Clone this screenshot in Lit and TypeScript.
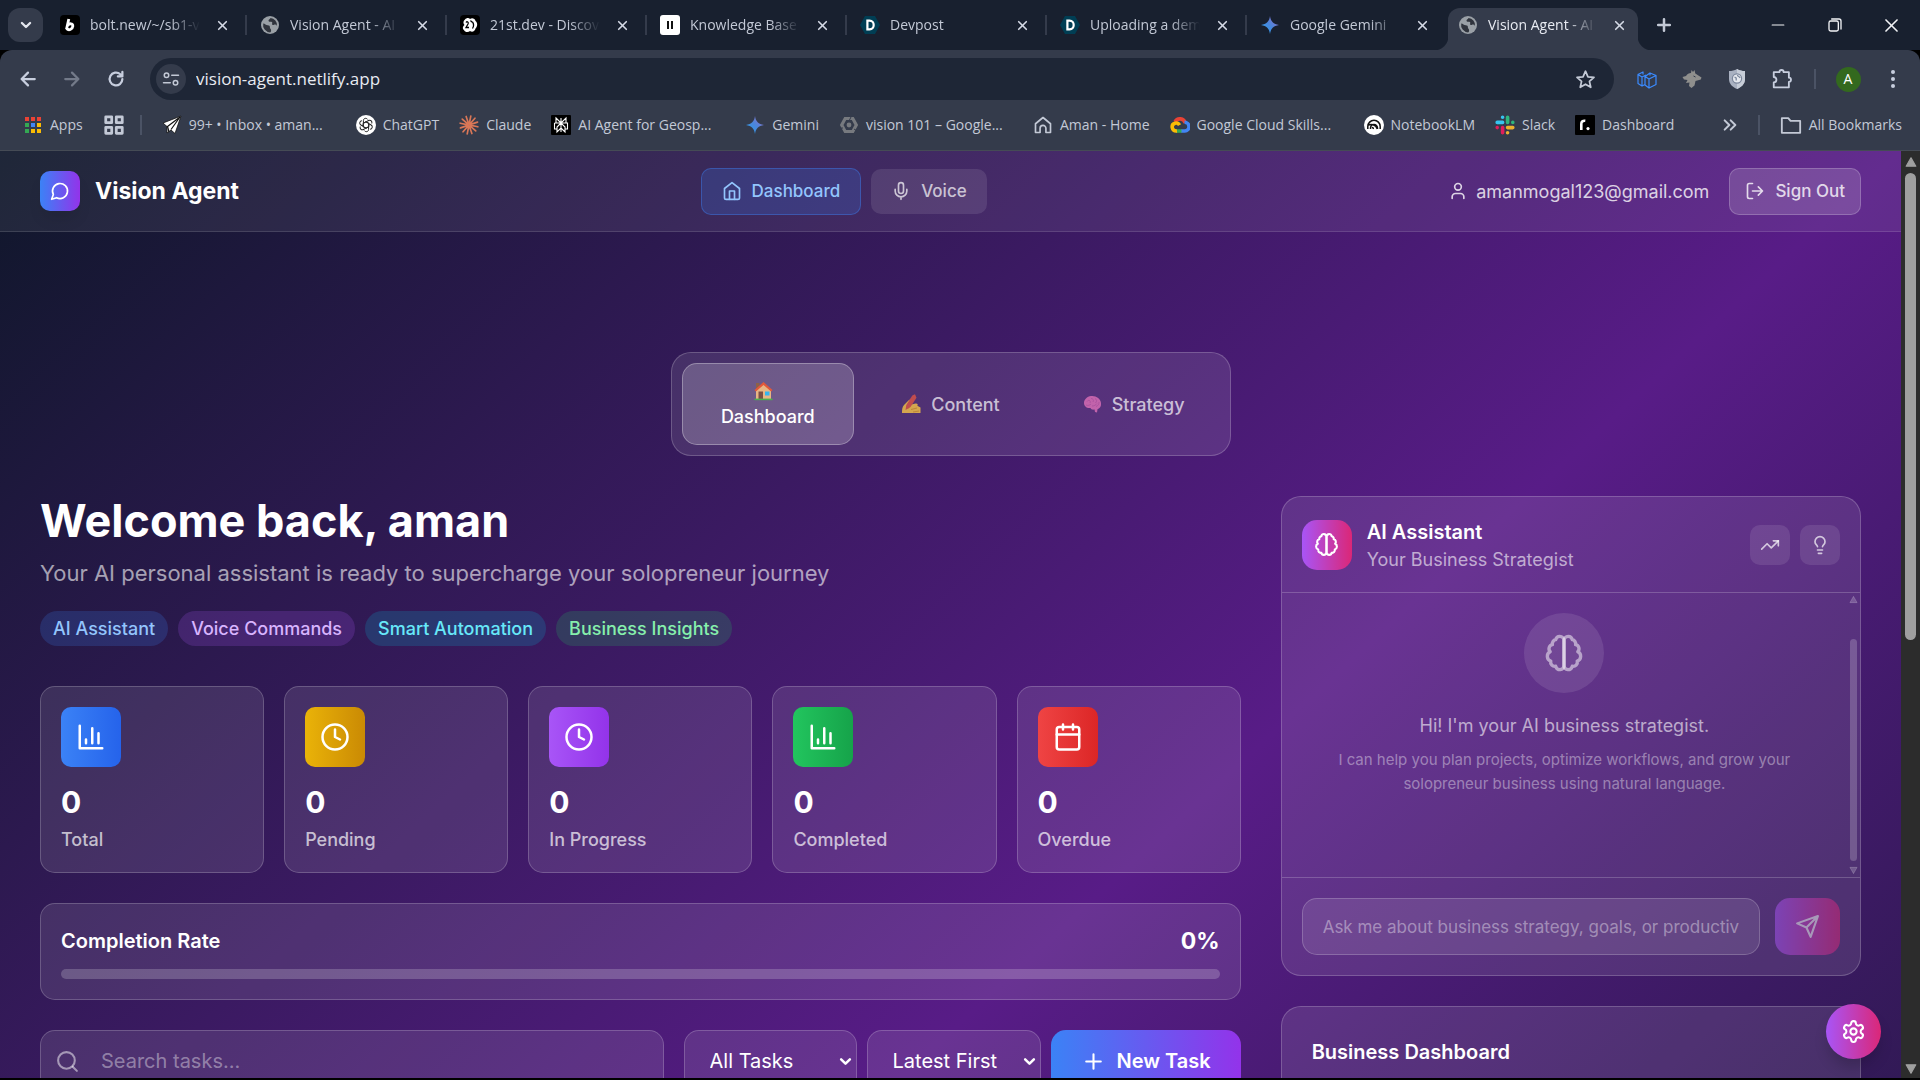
import { LitElement, html, css, svg, type TemplateResult } from "lit";
import { customElement, property } from "lit/decorators.js";
import { classMap } from "lit/directives/class-map.js";

/* ---------- Line icons (24 unit grid) ---------- */

const line: Record<string, TemplateResult> = {
  message: svg`<path d="M7.9 20A9 9 0 1 0 4 16.1L2 22Z"/>`,
  home: svg`<path d="m3 9 9-7 9 7v11a2 2 0 0 1-2 2H5a2 2 0 0 1-2-2z"/><path d="M9 22V12h6v10"/>`,
  mic: svg`<path d="M12 2a3 3 0 0 0-3 3v7a3 3 0 0 0 6 0V5a3 3 0 0 0-3-3Z"/><path d="M19 10v2a7 7 0 0 1-14 0v-2M12 19v3"/>`,
  user: svg`<path d="M19 21v-2a4 4 0 0 0-4-4H9a4 4 0 0 0-4 4v2"/><circle cx="12" cy="7" r="4"/>`,
  logout: svg`<path d="M9 21H5a2 2 0 0 1-2-2V5a2 2 0 0 1 2-2h4M16 17l5-5-5-5M21 12H9"/>`,
  chart: svg`<path d="M3 3v18h18M18 17V9M13 17V5M8 17v-3"/>`,
  clock: svg`<circle cx="12" cy="12" r="10"/><path d="M12 6v6l4 2"/>`,
  calendar: svg`<rect x="3" y="4" width="18" height="18" rx="2"/><path d="M16 2v4M8 2v4M3 10h18"/>`,
  brain: svg`<path d="M9.5 2A2.5 2.5 0 0 1 12 4.5v15a2.5 2.5 0 0 1-4.96.44 2.5 2.5 0 0 1-2.96-3.08 3 3 0 0 1-.34-5.58 2.5 2.5 0 0 1 1.32-4.24 2.5 2.5 0 0 1 1.98-3A2.5 2.5 0 0 1 9.5 2Z"/><path d="M14.5 2A2.5 2.5 0 0 0 12 4.5v15a2.5 2.5 0 0 0 4.96.44 2.5 2.5 0 0 0 2.96-3.08 3 3 0 0 0 .34-5.58 2.5 2.5 0 0 0-1.32-4.24 2.5 2.5 0 0 0-1.98-3A2.5 2.5 0 0 0 14.5 2Z"/>`,
  trend: svg`<path d="m22 7-8.5 8.5-5-5L2 17"/><path d="M16 7h6v6"/>`,
  bulb: svg`<path d="M15 14c.2-1 .7-1.7 1.5-2.5 1-.9 1.5-2.2 1.5-3.5A6 6 0 0 0 6 8c0 1 .2 2.2 1.5 3.5.7.7 1.3 1.5 1.5 2.5M9 18h6M10 22h4"/>`,
  send: svg`<path d="m22 2-7 20-4-9-9-4ZM22 2 11 13"/>`,
  gear: svg`<path d="M12.22 2h-.44a2 2 0 0 0-2 2v.18a2 2 0 0 1-1 1.73l-.43.25a2 2 0 0 1-2 0l-.15-.08a2 2 0 0 0-2.73.73l-.22.38a2 2 0 0 0 .73 2.73l.15.1a2 2 0 0 1 1 1.72v.51a2 2 0 0 1-1 1.74l-.15.09a2 2 0 0 0-.73 2.73l.22.38a2 2 0 0 0 2.73.73l.15-.08a2 2 0 0 1 2 0l.43.25a2 2 0 0 1 1 1.73V20a2 2 0 0 0 2 2h.44a2 2 0 0 0 2-2v-.18a2 2 0 0 1 1-1.73l.43-.25a2 2 0 0 1 2 0l.15.08a2 2 0 0 0 2.73-.73l.22-.39a2 2 0 0 0-.73-2.73l-.15-.08a2 2 0 0 1-1-1.74v-.5a2 2 0 0 1 1-1.74l.15-.09a2 2 0 0 0 .73-2.73l-.22-.38a2 2 0 0 0-2.73-.73l-.15.08a2 2 0 0 1-2 0l-.43-.25a2 2 0 0 1-1-1.73V4a2 2 0 0 0-2-2z"/><circle cx="12" cy="12" r="3"/>`,
  search: svg`<circle cx="11" cy="11" r="8"/><path d="m21 21-4-4"/>`,
  plus: svg`<path d="M5 12h14M12 5v14"/>`,
  chevron: svg`<path d="m5 8.500 7 7 7-7"/>`,
  close: svg`<path d="M5 5l14 14M19 5 5 19"/>`,
  back: svg`<path d="M21 12H4M12 3.500 3.500 12l8.500 8.500"/>`,
  forward: svg`<path d="M3 12h17M12 3.500 20.500 12 12 20.500"/>`,
  reload: svg`<path d="M20.500 12a8.500 8.500 0 1 1-2.800-6.300L20.500 8.500M20.500 2.500v6h-6"/>`,
  tune: svg`<circle cx="6" cy="7" r="3"/><path d="M13 7h9M2 17h9"/><circle cx="18" cy="17" r="3"/>`,
  star: svg`<path d="m12 2.500 2.800 6.400 6.900.6-5.200 4.600 1.500 6.800-6-3.600-6 3.600 1.500-6.800-5.200-4.600 6.900-.6z"/>`,
  puzzle: svg`<path d="M3 4.500h6.200a2.300 2.300 0 0 1 4.600 0H19.500v6a2.300 2.300 0 0 1 0 4.600v6H3v-5.500a2.900 2.900 0 0 0 0-5.800z"/>`,
  folder: svg`<path d="M2 4.500h7l2.500 3H22v13H2z"/>`,
  more: svg`<path d="m4 5 7 7-7 7M13 5l7 7-7 7"/>`,
  minimise: svg`<path d="M2 12h20"/>`,
  restore: svg`<rect x="3" y="6" width="14" height="15" rx="2.500"/><path d="M7 3h11a3 3 0 0 1 3 3v12"/>`,
  grid: svg`<path d="M3 3h6.500v6.500H3zM14.500 3H21v6.500h-6.500zM3 14.500h6.500V21H3zM14.500 14.500H21V21h-6.500z"/>`,
  house2: svg`<path d="M3 10.500 12 3l9 7.500V21h-5.500v-5a3.500 3.500 0 0 0-7 0v5H3z"/>`,
};

const icon = (name: string, size: number, weight = 2) => html`<svg
  width=${size} height=${size} viewBox="0 0 24 24" fill="none" stroke="currentColor"
  stroke-width=${weight} stroke-linecap="round" stroke-linejoin="round" aria-hidden="true"
>${line[name]}</svg>`;

/* ---------- Full-colour site marks (20 unit grid) ---------- */

const spark = svg`<defs><linearGradient id="sp" x1="0" y1="1" x2="1" y2="0"><stop offset="0.150" stop-color="#2f9be8"/><stop offset="0.500" stop-color="#4a86dc"/><stop offset="1" stop-color="#a06cc4"/></linearGradient></defs><path fill="url(#sp)" d="M10 1c.8 5.600 3.400 8.200 9 9-5.600.8-8.200 3.400-9 9-.8-5.600-3.400-8.200-9-9 5.600-.8 8.200-3.400 9-9z"/>`;
const rays = (n: number, r0: number, r1: number) =>
  Array.from({ length: n }, (_, i) => {
    const a = (i / n) * Math.PI * 2 + 0.2;
    const c = Math.cos(a);
    const s = Math.sin(a);
    return `M${(10 + r0 * c).toFixed(2)} ${(10 + r0 * s).toFixed(2)}L${(10 + r1 * c).toFixed(2)} ${(10 + r1 * s).toFixed(2)}`;
  }).join("");

const marks: Record<string, TemplateResult> = {
  bolt: svg`<rect width="20" height="20" rx="4"/><path fill="none" stroke="#fff" stroke-width="2.800" stroke-linejoin="round" d="M8.800 4 6.500 14.300M7.600 10.500c1.500-2.500 5.600-2.300 5.200.7-.4 3.200-4 4.800-6.200 2.300"/>`,
  globe: svg`<circle cx="10" cy="10" r="9" fill="#9aa0a6"/><path fill="#30343d" d="M3.200 8.500c2 .2 2.600 1.700 4.500 1.800 1.700.1 2.300.8 2.200 2.200-.1 1.300 1.300 1.300 1.200 3 0 .9-.4 1.600-.9 1.900A7.500 7.500 0 0 1 3.200 8.500zM10.500 3c-.3 1.300-1.800 1.300-2 2.600-.1 1.200 1.200 1.400 2.600 1.200 1.200-.1 1.300.9 1 1.900-.2 1 .8 1.600 1.900 1.100 1.200-.6 2.300-.2 3 1.100A7.300 7.300 0 0 0 10.500 3z"/>`,
  twentyfirst: svg`<rect width="20" height="20" rx="4"/><path fill="#fff" d="M5 4.500c1.500-2 4-2 5-.5 2-1.500 5-.5 5.500 2 2.500 2 2 5.500 0 7.500-.5 3-3.500 4-5.500 2.500-1.500 1.500-5 1.500-6-1-2-1.500-1-4 .5-5C3 8.500 3 6 5 4.500z"/><path fill="none" stroke="#000" stroke-width="1.300" d="M6 7.500C7 6 9 7 8 9l-2 3.500h3M12.500 7c1.500 2 1.500 4 0 6.500M10.500 5.500c.5 1 1 1.500 2 1.500"/>`,
  eleven: svg`<rect width="20" height="20" rx="3" fill="#fff"/><path fill="#111" d="M7 6h2v8H7zM11 6h2v8h-2z"/>`,
  devpost: svg`<path fill="#003e54" d="M5 1h10l5 9-5 9H5l-5-9z"/><path fill="none" stroke="#fff" stroke-width="2.200" d="M7.400 5.600v8.800h2.100c5.600 0 5.600-8.800 0-8.800z"/>`,
  spark,
  apps: svg`${["#ea4335", "#ea4335", "#ea4335", "#34a853", "#4285f4", "#fbbc04", "#34a853", "#fbbc04", "#fbbc04"].map(
    (c, i) => svg`<rect x=${2 + (i % 3) * 6} y=${2 + Math.floor(i / 3) * 6} width="4" height="4" fill=${c}/>`,
  )}`,
  plane: svg`<path fill="#fff" stroke="#111" stroke-width="0.800" d="M19 1 1 8l4 3.500V18l4-3 4 3.500z"/><path fill="none" stroke="#111" stroke-width="1.200" d="M18 2 5.500 11.500 7 17M18 2 9 14.500"/>`,
  chatgpt: svg`<circle cx="10" cy="10" r="10" fill="#fff"/><g fill="none" stroke="#222" stroke-width="1">${[0, 60, 120, 180, 240, 300].map(
    (r) => svg`<path transform="rotate(${r} 10 10)" d="M10 6.800 7.400 8.300V5.600C7.400 3 10.600 2.700 11.600 4.400M10 6.800l3 1.700"/>`,
  )}</g>`,
  claude: svg`<path fill="none" stroke="#d97757" stroke-width="1.700" stroke-linecap="round" d=${rays(12, 1, 9)}/>`,
  perplexity: svg`<rect width="20" height="20" rx="1"/><path fill="none" stroke="#fff" stroke-width="1.100" d="M10 3v14M5 3l5 5 5-5v5H5zM3.500 8h13v6H14M3.500 8v6H6M10 8l-4 4v5l4-4 4 4v-5z"/>`,
  hex: svg`<path fill="none" stroke="#777a7f" stroke-width="3.200" d="M6.200 3.500h7.600L17.300 10l-3.500 6.500H6.200L2.700 10z"/><circle cx="10" cy="10" r="2.400" fill="#777a7f"/><path stroke="#343b4b" stroke-width="1" d="m12.500 1-2 4M4 13l-3 .2M15 14l3 2"/>`,
  cloud: svg`<g fill="none" stroke-width="3.600"><path stroke="#ea4335" d="M5 6.800A5.500 5.500 0 0 1 15.200 8"/><path stroke="#4285f4" d="M14.500 7.300a4.300 4.300 0 0 1 .3 8.700H11"/><path stroke="#34a853" d="M11.500 16H6"/><path stroke="#fbbc04" d="M7 16C1.500 16.500.6 9.500 5 8.200c2-.6 3.600.3 4.500 2"/></g>`,
  notebook: svg`<circle cx="10" cy="10" r="10" fill="#fff"/><path fill="none" stroke="#111" stroke-width="1.500" d="M3.800 14v-2.500a6.200 6.200 0 0 1 12.400 0V14M6.500 14v-1a3.500 3.500 0 0 1 7 0v1M3.800 10.500c3-2 8-1 9.500 3.500M9.300 14a1.300 1.300 0 0 0-1.500-1.500"/>`,
  slack: svg`<g fill="none" stroke-width="3.600" stroke-linecap="round"><path stroke="#36c5f0" d="M7.600 2.200v0M2.200 7.400h5.400"/><path stroke="#2eb67d" d="M12.600 2.200v5.200M17.800 7.400v0"/><path stroke="#ecb22e" d="M12.600 12.600h5.200M12.600 17.800v0"/><path stroke="#e01e5a" d="M7.600 12.600v5.200M2.200 12.600v0"/></g>`,
  resend: svg`<rect width="20" height="20" rx="1"/><path fill="none" stroke="#fff" stroke-width="2.600" d="M6.300 15V9c0-2.500 1.500-3.500 4-3.200"/><circle cx="13" cy="13.600" r="1.600" fill="#fff"/>`,
  cubes: svg`<g fill="none" stroke="#3b8bff" stroke-width="1.200" stroke-linejoin="round"><path d="M1 5.500v9l4 2.500V8zM1 5.500 6 3v2.500M5 8l4-2M5 17l3-1.500M8 7.500v8.500l4 3V10zM8 7.500l5-3.500v2.500M12 10l7-3.500v9L12 19M13 4l6 2.500"/></g>`,
  dog: svg`<path fill="#8f8f8d" d="M.5 8 4 7c1-2 3-3 5-3l.5-3L11 3l1.500-2 .8 3.500L19.500 8.500l-.7 2-5.300 1.500-1 4.500-3 2.500L7 17l.5-3.500L4 14l1.500-3L2 10.500z"/><path stroke="#343b4b" stroke-width="1" d="m11.500 7 2 1"/>`,
  shield: svg`<path fill="#a9b1c1" d="M10 0c2.500 1.500 5 2 8 2v8c0 5-3.500 8-8 10-4.500-2-8-5-8-10V2c3 0 5.500-.5 8-2z"/><path fill="#c7cdd8" d="M10 0c2.500 1.500 5 2 8 2v8c0 5-3.500 8-8 10z"/><circle cx="10" cy="9.500" r="4.600" fill="#e6e9ef" stroke="#7d889d" stroke-width="1.200"/><path fill="none" stroke="#7d889d" stroke-width="1.300" d="M7.500 8.500c2-.5 2 1.500 1.500 3M10.500 6c0 2 2 1 2.500 3"/>`,
  houseEmoji: svg`<path fill="#8d6148" d="M3 2h3.500v6H3z"/><path fill="#e8b684" d="M3 9.500 10.500 3 18 9.500V18H3z"/><path fill="#e2583a" d="m10.500 1 9 8-1.400 1.500-7.600-6.600-7.600 6.600L1.500 9z"/><path fill="#7d4f45" d="M5.500 10.500H10V18H5.500z"/><path fill="#35b5f0" d="M12 10.500h4.500v4H12z"/><path fill="#4caf50" d="M1.500 17.600h18v1.600h-18z"/>`,
  writeEmoji: svg`<path fill="#f6c445" d="M1 19c0-3 0-6 2-8l5-5c1.500-1 3 .4 2 2l-1.500 3 6-1.500c2-.3 2.800 1.200 1.800 2.300l3.200 1.700V19z"/><path fill="none" stroke="#d99b2b" stroke-width="1" d="M9 12.500 6.500 15M10 15.500l6-1.500M12 18l6-1"/><path fill="#dd5345" d="M11.300 1.500 14 .3l1.500 3.400L9.500 13 4.500 16l.8-5z"/>`,
  brainEmoji: svg`<path fill="#dd70b8" d="M2 9c0-3.500 3-6.500 7-7 5-.6 9.500 2.500 10 7 .4 3-1 5.500-3.500 6.200L15 18.500l-2-.6-.5-2.400c-2 .5-3.500-.2-4-1.500C4.500 14.500 2 12 2 9z"/><path fill="none" stroke="#b953a3" stroke-width="0.700" d="M5 7.500C7 5 9 7 8 9M9 4.500c2 0 3 1.500 2 3.500M13 4.500c2 1 2 3 .5 4.500M4 11c2 1 4 0 5-1M10 12c2 0 4-1 5-2.500M17 8c0 2-.5 3.500-3 4.500"/>`,
};

const mark = (name: string, size = 20) =>
  html`<svg width=${size} height=${size} viewBox="0 0 20 20" aria-hidden="true">${marks[name]}</svg>`;

/* ---------- Browser frame ---------- */

@customElement("browser-chrome")
class BrowserChrome extends LitElement {
  private tabs = [
    ["bolt", "bolt.new/~/sb1-v"],
    ["globe", "Vision Agent - AI"],
    ["twentyfirst", "21st.dev - Discov"],
    ["eleven", "Knowledge Base"],
    ["devpost", "Devpost"],
    ["devpost", "Uploading a dem"],
    ["spark", "Google Gemini"],
    ["globe", "Vision Agent - AI"],
  ];

  private bookmarks: [string, string, boolean][] = [
    ["plane", "99+ • Inbox • aman...", true],
    ["chatgpt", "ChatGPT", false],
    ["claude", "Claude", false],
    ["perplexity", "AI Agent for Geosp...", true],
    ["spark", "Gemini", false],
    ["hex", "vision 101 – Google...", true],
    ["home", "Aman - Home", false],
    ["cloud", "Google Cloud Skills...", true],
    ["notebook", "NotebookLM", false],
    ["slack", "Slack", false],
    ["resend", "Dashboard", false],
  ];

  static styles = css`
    :host { display: block; font: 14px/20px "Open Sans", "Noto Sans", sans-serif; color: #c3c9d6; }
    svg { display: block; flex: none; }
    button { all: unset; box-sizing: border-box; display: flex; align-items: center; justify-content: center; flex: none; cursor: pointer; }
    a { color: inherit; text-decoration: none; white-space: nowrap; }
    .strip { display: flex; height: 50px; background: #18202f; }
    .tab-search { width: 35px; height: 34px; margin: 8px 5px 8px 8px; border-radius: 12px; background: #343b4b; color: #e3e6ee; }
    .tabs { display: flex; flex: 0 1 1590px; min-width: 0; }
    .tab { position: relative; display: flex; align-items: center; flex: 1 1 0; min-width: 0; box-sizing: border-box; margin-top: 8px; padding: 0 16px 8px 12px; }
    .tab:not(.active)::after { content: ""; position: absolute; right: 1px; top: 7px; width: 2px; height: 20px; background: #343b4b; }
    .tab:nth-last-child(2)::after { display: none; }
    .tab.active { flex: 0 1 190px; padding: 0 9px 8px 10px; background: #343b4b; border-radius: 12px 12px 0 0; color: #e8ebf2; }
    .tab.active::before, .tab.active::after { content: ""; position: absolute; bottom: 0; width: 14px; height: 14px; }
    .tab.active::before { right: 100%; background: radial-gradient(circle at 0 0, transparent 14px, #343b4b 15px); }
    .tab.active::after { left: 100%; background: radial-gradient(circle at 100% 0, transparent 14px, #343b4b 15px); }
    .title { flex: 1; min-width: 0; margin: 0 10px; overflow: hidden; white-space: nowrap; mask-image: linear-gradient(90deg, #000 calc(100% - 32px), transparent calc(100% - 2px)); }
    .close { width: 20px; height: 20px; color: #d5dae6; }
    .new-tab { width: 34px; margin-left: 9px; }
    .window { display: flex; margin-left: auto; color: #f2f3f6; }
    .window button { width: 57px; }
    .toolbar { display: flex; align-items: center; background: #343b4b; border-radius: 12px 12px 0 0; padding: 8px 6px 0; }
    .toolbar > button { width: 44px; height: 42px; }
    .back { color: #c7cede; }
    .dim { color: #737a89; }
    .address { display: flex; align-items: center; flex: 1; height: 42px; margin: 0 12px; padding: 0 18px 0 6px; border-radius: 21px; background: #1e2636; }
    .site { width: 30px; height: 30px; border-radius: 50%; background: #343b4b; }
    .url { all: unset; flex: 1; padding-left: 10px; font-size: 17px; color: #e8ebf2; }
    .extras { display: flex; align-items: center; gap: 3px; }
    .extras button { width: 42px; height: 42px; }
    .extras .bar { margin: 0 8px; }
    .avatar-ring { width: 25px; height: 25px; display: grid; place-items: center; border-radius: 50%; background: #33691e; color: #fff; }
    .bar { width: 2px; height: 20px; flex: none; background: #4b5365; }
    .marks { display: flex; align-items: center; gap: 20px; height: 50px; box-sizing: border-box; padding: 0 18px 0 23px; background: #343b4b; }
    .marks a { display: flex; align-items: center; gap: 7px; }
    .marks .groups { width: 17px; }
    .marks .long { width: 174px; }
    .more { margin-left: auto; }
    .rule { height: 1px; background: #454b55; }
  `;

  render() {
    return html`
      <div class="strip">
        <button class="tab-search" aria-label="Search tabs">${icon("chevron", 14, 4)}</button>
        <div class="tabs" role="tablist">
          ${this.tabs.map(
            ([m, t], i) => html`<div class=${classMap({ tab: true, active: i === 7 })} role="tab" aria-selected=${i === 7 ? "true" : "false"}>
              ${mark(m)}<span class="title">${t}</span>
              <button class="close" aria-label="Close tab">${icon("close", 13, 3)}</button>
            </div>`,
          )}
        </div>
        <button class="new-tab" aria-label="New tab">${icon("plus", 20, 3)}</button>
        <div class="window">
          <button aria-label="Minimise">${icon("minimise", 14, 2)}</button>
          <button aria-label="Restore">${icon("restore", 16, 2)}</button>
          <button aria-label="Close">${icon("close", 19, 2)}</button>
        </div>
      </div>
      <div class="toolbar">
        <button class="back" aria-label="Back">${icon("back", 18, 3)}</button>
        <button class="dim" aria-label="Forward">${icon("forward", 18, 3)}</button>
        <button class="back" aria-label="Reload">${icon("reload", 18, 3)}</button>
        <div class="address">
          <button class="site" aria-label="Site information">${icon("tune", 18, 2)}</button>
          <input class="url" aria-label="Address" value="vision-agent.netlify.app" />
          <button aria-label="Bookmark this page">${icon("star", 21, 2)}</button>
        </div>
        <div class="extras">
          <button aria-label="Blocks extension">${mark("cubes")}</button>
          <button aria-label="Wolf extension">${mark("dog")}</button>
          <button aria-label="Shield extension">${mark("shield")}</button>
          <button class="back" aria-label="Extensions">${icon("puzzle", 22, 2)}</button>
          <span class="bar"></span>
          <button aria-label="Profile"><span class="avatar-ring">A</span></button>
          <button class="back" aria-label="Menu">
            <svg width="20" height="20" viewBox="0 0 20 20" fill="currentColor"><circle cx="10" cy="3" r="2" /><circle cx="10" cy="10" r="2" /><circle cx="10" cy="17" r="2" /></svg>
          </button>
        </div>
      </div>
      <nav class="marks" aria-label="Bookmarks">
        <a href="#apps">${mark("apps")}Apps</a>
        <a class="groups" href="#groups" aria-label="Tab groups">${icon("grid", 22, 3)}</a>
        <span class="bar"></span>
        ${this.bookmarks.map(
          ([m, t, long]) => html`<a href="#b" class=${classMap({ long })}>${m === "home" ? icon("house2", 20, 2) : mark(m)}<span>${t}</span></a>`,
        )}
        <button class="more" aria-label="More bookmarks">${icon("more", 16, 3)}</button>
        <span class="bar"></span>
        <a href="#all">${icon("folder", 22, 2)}All Bookmarks</a>
      </nav>
      <div class="rule"></div>
    `;
  }
}

/* ---------- Task statistic card ---------- */

@customElement("stat-card")
class StatCard extends LitElement {
  @property() label = "";
  @property() glyph = "chart";
  @property() tone = "blue";
  @property({ type: Number }) value = 0;

  static styles = css`
    :host { display: block; padding: 20px; border: 1px solid #fff3; border-radius: 15px; background: #ffffff1a; color: #fff; }
    .tile { display: grid; place-items: center; width: 60px; height: 60px; border-radius: 10px; margin-bottom: 15px; }
    .blue { background: linear-gradient(90deg, #3b82f6, #2563eb); }
    .yellow { background: linear-gradient(90deg, #eab308, #ca8a04); }
    .purple { background: linear-gradient(90deg, #a855f7, #9333ea); }
    .green { background: linear-gradient(90deg, #22c55e, #16a34a); }
    .red { background: linear-gradient(90deg, #ef4444, #dc2626); }
    .value { margin: 0 0 5px; font-size: 30px; line-height: 40px; font-weight: 700; }
    .label { margin: 0; font-size: 18px; line-height: 25px; font-weight: 500; color: #ffffffb3; }
  `;

  render() {
    return html`<div class="tile ${this.tone}">${icon(this.glyph, 30)}</div>
      <p class="value">${this.value}</p>
      <p class="label">${this.label}</p>`;
  }
}

/* ---------- Application page ---------- */

@customElement("app-root")
class AppRoot extends LitElement {
  private stats = [
    ["Total", "chart", "blue"],
    ["Pending", "clock", "yellow"],
    ["In Progress", "clock", "purple"],
    ["Completed", "chart", "green"],
    ["Overdue", "calendar", "red"],
  ];

  private completion = 0;

  static styles = css`
    :host { display: flex; flex-direction: column; height: 100vh; box-sizing: border-box; padding-bottom: 2px; overflow: hidden; background: #000; font: 18px/25px Inter, "Liberation Sans", sans-serif; color: #fff; }
    *, *::before { box-sizing: border-box; }
    svg { display: block; flex: none; }
    h1, h2, h3, p { margin: 0; }
    button, input, select { font: inherit; color: inherit; margin: 0; }
    button { cursor: pointer; }
    browser-chrome { flex: none; }

    .window { display: flex; flex: 1; min-height: 0; }
    .page { position: relative; flex: 1; min-width: 0; overflow: hidden; background: linear-gradient(to bottom right, #0f172a, #581c87, #0f172a) 0 0 / 100% 190% no-repeat; }
    .track { display: flex; flex-direction: column; align-items: center; width: 19px; padding: 5px 0 3px; background: #2c2c2c; color: #9f9f9f; }
    .thumb { width: 11px; height: 467px; margin: 5px 0 auto; border-radius: 6px; background: #9f9f9f; }

    .header { display: flex; align-items: center; justify-content: space-between; height: 81px; padding: 0 40px; background: #ffffff12; border-bottom: 1px solid #ffffff1f; }
    .brand, .account, .nav { display: flex; align-items: center; }
    .brand { gap: 15px; font-size: 23px; font-weight: 700; }
    .logo { display: grid; place-items: center; width: 40px; height: 40px; border-radius: 10px; background: linear-gradient(90deg, #3b82f6, #9333ea); box-shadow: 0 10px 15px -3px #0000001a; }
    .nav { gap: 10px; }
    .link { display: flex; align-items: center; gap: 10px; padding: 10px 20px; border-radius: 10px; background: #ffffff1a; color: #ffffffb3; font-size: 17px; font-weight: 500; text-decoration: none; }
    .link.current { border: 1px solid #3b82f666; background: #3b82f633; color: #93c5fd; }
    .account { gap: 20px; color: #fffc; }
    .mail { display: flex; align-items: center; gap: 8px; }
    .signout { display: flex; align-items: center; gap: 10px; padding: 10px 15px; border: 1px solid #fff3; border-radius: 10px; background: #ffffff26; font-size: 17px; font-weight: 500; }

    .content { padding: 120px 40px 0; }
    .switch { display: grid; grid-template-columns: repeat(3, 1fr); gap: 10px; width: 560px; margin: 0 auto 40px; padding: 10px; border: 1px solid #fff3; border-radius: 20px; background: #ffffff1a; }
    .seg { padding: 15px 30px; border: 1px solid transparent; border-radius: 15px; background: none; color: #ffffffb3; font-weight: 500; text-align: center; }
    .seg svg { display: inline-block; vertical-align: -3px; margin-right: 10px; opacity: 0.8; }
    .seg.on { background: #fff3; border-color: #ffffff4d; color: #fff; }
    .seg.on svg { opacity: 1; }

    .columns { display: grid; grid-template-columns: repeat(3, 1fr); gap: 40px; }
    .main { grid-column: span 2; min-width: 0; }
    .side { display: flex; flex-direction: column; gap: 30px; min-width: 0; }
    h1 { font-size: 45px; line-height: 50px; font-weight: 700; }
    .lead { margin: 10px 0 20px; font-size: 22px; line-height: 35px; color: #fff9; }
    .pills { display: flex; flex-wrap: wrap; gap: 10px; margin-bottom: 40px; font-weight: 500; }
    .pill { padding: 5px 13px; border-radius: 18px; }
    .pill.blue { background: #3b82f633; color: #93c5fd; }
    .pill.purple { background: #a855f733; color: #d8b4fe; }
    .pill.cyan { background: #06b6d433; color: #67e8f9; }
    .pill.green { background: #22c55e33; color: #86efac; }
    .stats { display: grid; grid-template-columns: repeat(5, 1fr); gap: 20px; margin-bottom: 30px; }
    .card { border: 1px solid #fff3; background: #ffffff1a; }
    .rate { padding: 20px; border-radius: 15px; margin-bottom: 30px; }
    .rate-head { display: flex; justify-content: space-between; align-items: center; margin-bottom: 10px; line-height: 35px; }
    .rate-head h2 { font-size: 20px; font-weight: 600; line-height: 35px; }
    .percent { font-size: 23px; font-weight: 700; }
    .meter { height: 10px; border-radius: 5px; background: #fff3; overflow: hidden; }
    .fill { height: 100%; background: linear-gradient(90deg, #3b82f6, #9333ea); }

    .tools { display: flex; gap: 20px; font-size: 20px; line-height: 30px; }
    .search, .pick { display: grid; align-items: center; }
    .search { flex: 1; }
    .search > *, .pick > * { grid-area: 1 / 1; }
    .search svg { margin-left: 15px; color: #ffffff80; }
    .search svg, .pick svg { pointer-events: none; }
    .field { width: 100%; height: 62px; border: 1px solid #fff3; border-radius: 15px; background: #ffffff1a; outline: none; }
    .search .field { padding: 0 20px 0 60px; }
    ::placeholder { color: #ffffff66; opacity: 1; }
    .controls { display: flex; gap: 10px; }
    .pick .field { appearance: none; padding: 0 42px 0 25px; }
    .pick .field option { color: #111; }
    .pick svg { justify-self: end; margin-right: 4px; }
    .new { display: flex; align-items: center; gap: 11px; padding: 0 30px; border: 0; border-radius: 15px; background: linear-gradient(90deg, #3b82f6, #9333ea); font-weight: 600; }

    .chat { display: flex; flex-direction: column; height: 480px; border-radius: 20px; }
    .chat-head { display: flex; align-items: center; gap: 10px; padding: 20px; border-bottom: 1px solid #fff3; }
    .avatar { display: grid; place-items: center; width: 50px; height: 50px; border-radius: 15px; background: linear-gradient(90deg, #a855f7, #db2777); margin-right: 5px; }
    .who { flex: 1; color: #fff9; }
    .who h2 { font-size: 20px; line-height: 30px; font-weight: 600; color: #fff; }
    .mini { display: grid; place-items: center; width: 40px; height: 40px; padding: 0; border: 0; border-radius: 10px; background: #ffffff1a; color: #ffffffb3; }
    .log { display: flex; flex: 1; min-height: 0; }
    .intro { flex: 1; padding: 20px 35px; text-align: center; color: #fff9; }
    .bubble { display: grid; place-items: center; width: 80px; height: 80px; margin: 0 auto 20px; border-radius: 50%; background: #ffffff1a; color: #ffffff80; }
    .hint { margin-top: 10px; font-size: 15px; line-height: 24px; color: #fff6; }
    .rail { display: flex; flex-direction: column; align-items: center; width: 13px; padding: 2px 0; color: #ffffff33; }
    .rail-thumb { flex: 1; width: 7px; margin: 35px 0 5px; border-radius: 4px; background: currentColor; }
    .ask { display: flex; gap: 15px; padding: 20px; border-top: 1px solid #fff3; }
    .ask .field { flex: 1; min-width: 0; height: 57px; padding: 0 20px; text-overflow: clip; font-size: 17px; }
    .send { display: grid; place-items: center; width: 65px; padding: 0; border: 0; border-radius: 15px; background: linear-gradient(90deg, #a855f7, #db2777); opacity: 0.5; }
    .business { padding: 30px; border-radius: 20px; height: 300px; }
    .business h2 { font-size: 20px; line-height: 30px; font-weight: 600; }
    .fab { position: absolute; right: 20px; bottom: 19px; display: grid; place-items: center; width: 55px; height: 55px; padding: 0; border: 0; border-radius: 50%; background: linear-gradient(90deg, #a855f7, #db2777); box-shadow: 0 10px 15px -3px #0003; }
  `;

  private arrow(w: number, up: boolean) {
    return html`<svg width=${w} height=${w} viewBox="0 0 10 10" fill="currentColor" stroke="currentColor" stroke-linejoin="round"><path d=${up ? "M5 1.500 9 8.500H1z" : "M1 1.500h8L5 8.500z"} /></svg>`;
  }

  render() {
    return html`
      <browser-chrome></browser-chrome>
      <div class="window">
        <div class="page">
          <header class="header">
            <div class="brand"><span class="logo">${icon("message", 20)}</span>Vision Agent</div>
            <nav class="nav">
              <a class="link current" href="#dashboard">${icon("home", 20)}Dashboard</a>
              <a class="link" href="#voice">${icon("mic", 20)}Voice</a>
            </nav>
            <div class="account">
              <span class="mail">${icon("user", 20)}amanmogal123@gmail.com</span>
              <button class="signout">${icon("logout", 20)}Sign Out</button>
            </div>
          </header>
          <main class="content">
            <div class="switch">
              <button class="seg on">${mark("houseEmoji")}Dashboard</button>
              <button class="seg">${mark("writeEmoji")}Content</button>
              <button class="seg">${mark("brainEmoji")}Strategy</button>
            </div>
            <div class="columns">
              <section class="main">
                <h1>Welcome back, aman</h1>
                <p class="lead">Your AI personal assistant is ready to supercharge your solopreneur journey</p>
                <div class="pills">
                  <span class="pill blue">AI Assistant</span>
                  <span class="pill purple">Voice Commands</span>
                  <span class="pill cyan">Smart Automation</span>
                  <span class="pill green">Business Insights</span>
                </div>
                <div class="stats">
                  ${this.stats.map(([label, glyph, tone]) => html`<stat-card .label=${label} .glyph=${glyph} .tone=${tone}></stat-card>`)}
                </div>
                <div class="card rate">
                  <div class="rate-head"><h2>Completion Rate</h2><span class="percent">${this.completion}%</span></div>
                  <div class="meter"><div class="fill" style="width:${this.completion}%"></div></div>
                </div>
                <div class="tools">
                  <div class="search">
                    <input class="field" placeholder="Search tasks..." aria-label="Search tasks" />
                    ${icon("search", 25)}
                  </div>
                  <div class="controls">
                    <div class="pick">
                      <select class="field" aria-label="Filter tasks"><option>All Tasks</option><option>Completed</option></select>
                      ${icon("chevron", 15, 4)}
                    </div>
                    <div class="pick">
                      <select class="field" aria-label="Sort tasks"><option>Latest First</option></select>
                      ${icon("chevron", 15, 4)}
                    </div>
                    <button class="new">${icon("plus", 25)}New Task</button>
                  </div>
                </div>
              </section>
              <aside class="side">
                <section class="card chat">
                  <div class="chat-head">
                    <span class="avatar">${icon("brain", 25)}</span>
                    <div class="who"><h2>AI Assistant</h2><p>Your Business Strategist</p></div>
                    <button class="mini" aria-label="Insights">${icon("trend", 20)}</button>
                    <button class="mini" aria-label="Ideas">${icon("bulb", 20)}</button>
                  </div>
                  <div class="log">
                    <div class="intro">
                      <div class="bubble">${icon("brain", 40)}</div>
                      <p>Hi! I'm your AI business strategist.</p>
                      <p class="hint">I can help you plan projects, optimize workflows, and grow your solopreneur business using natural language.</p>
                    </div>
                    <div class="rail">${this.arrow(9, true)}<span class="rail-thumb"></span>${this.arrow(9, false)}</div>
                  </div>
                  <div class="ask">
                    <input class="field" placeholder="Ask me about business strategy, goals, or productivity..." aria-label="Message" />
                    <button class="send" aria-label="Send">${icon("send", 25)}</button>
                  </div>
                </section>
                <section class="card business"><h2>Business Dashboard</h2></section>
              </aside>
            </div>
          </main>
          <button class="fab" aria-label="Settings">${icon("gear", 25)}</button>
        </div>
        <div class="track">
          ${this.arrow(12, true)}<span class="thumb"></span>${this.arrow(12, false)}
        </div>
      </div>
    `;
  }
}
